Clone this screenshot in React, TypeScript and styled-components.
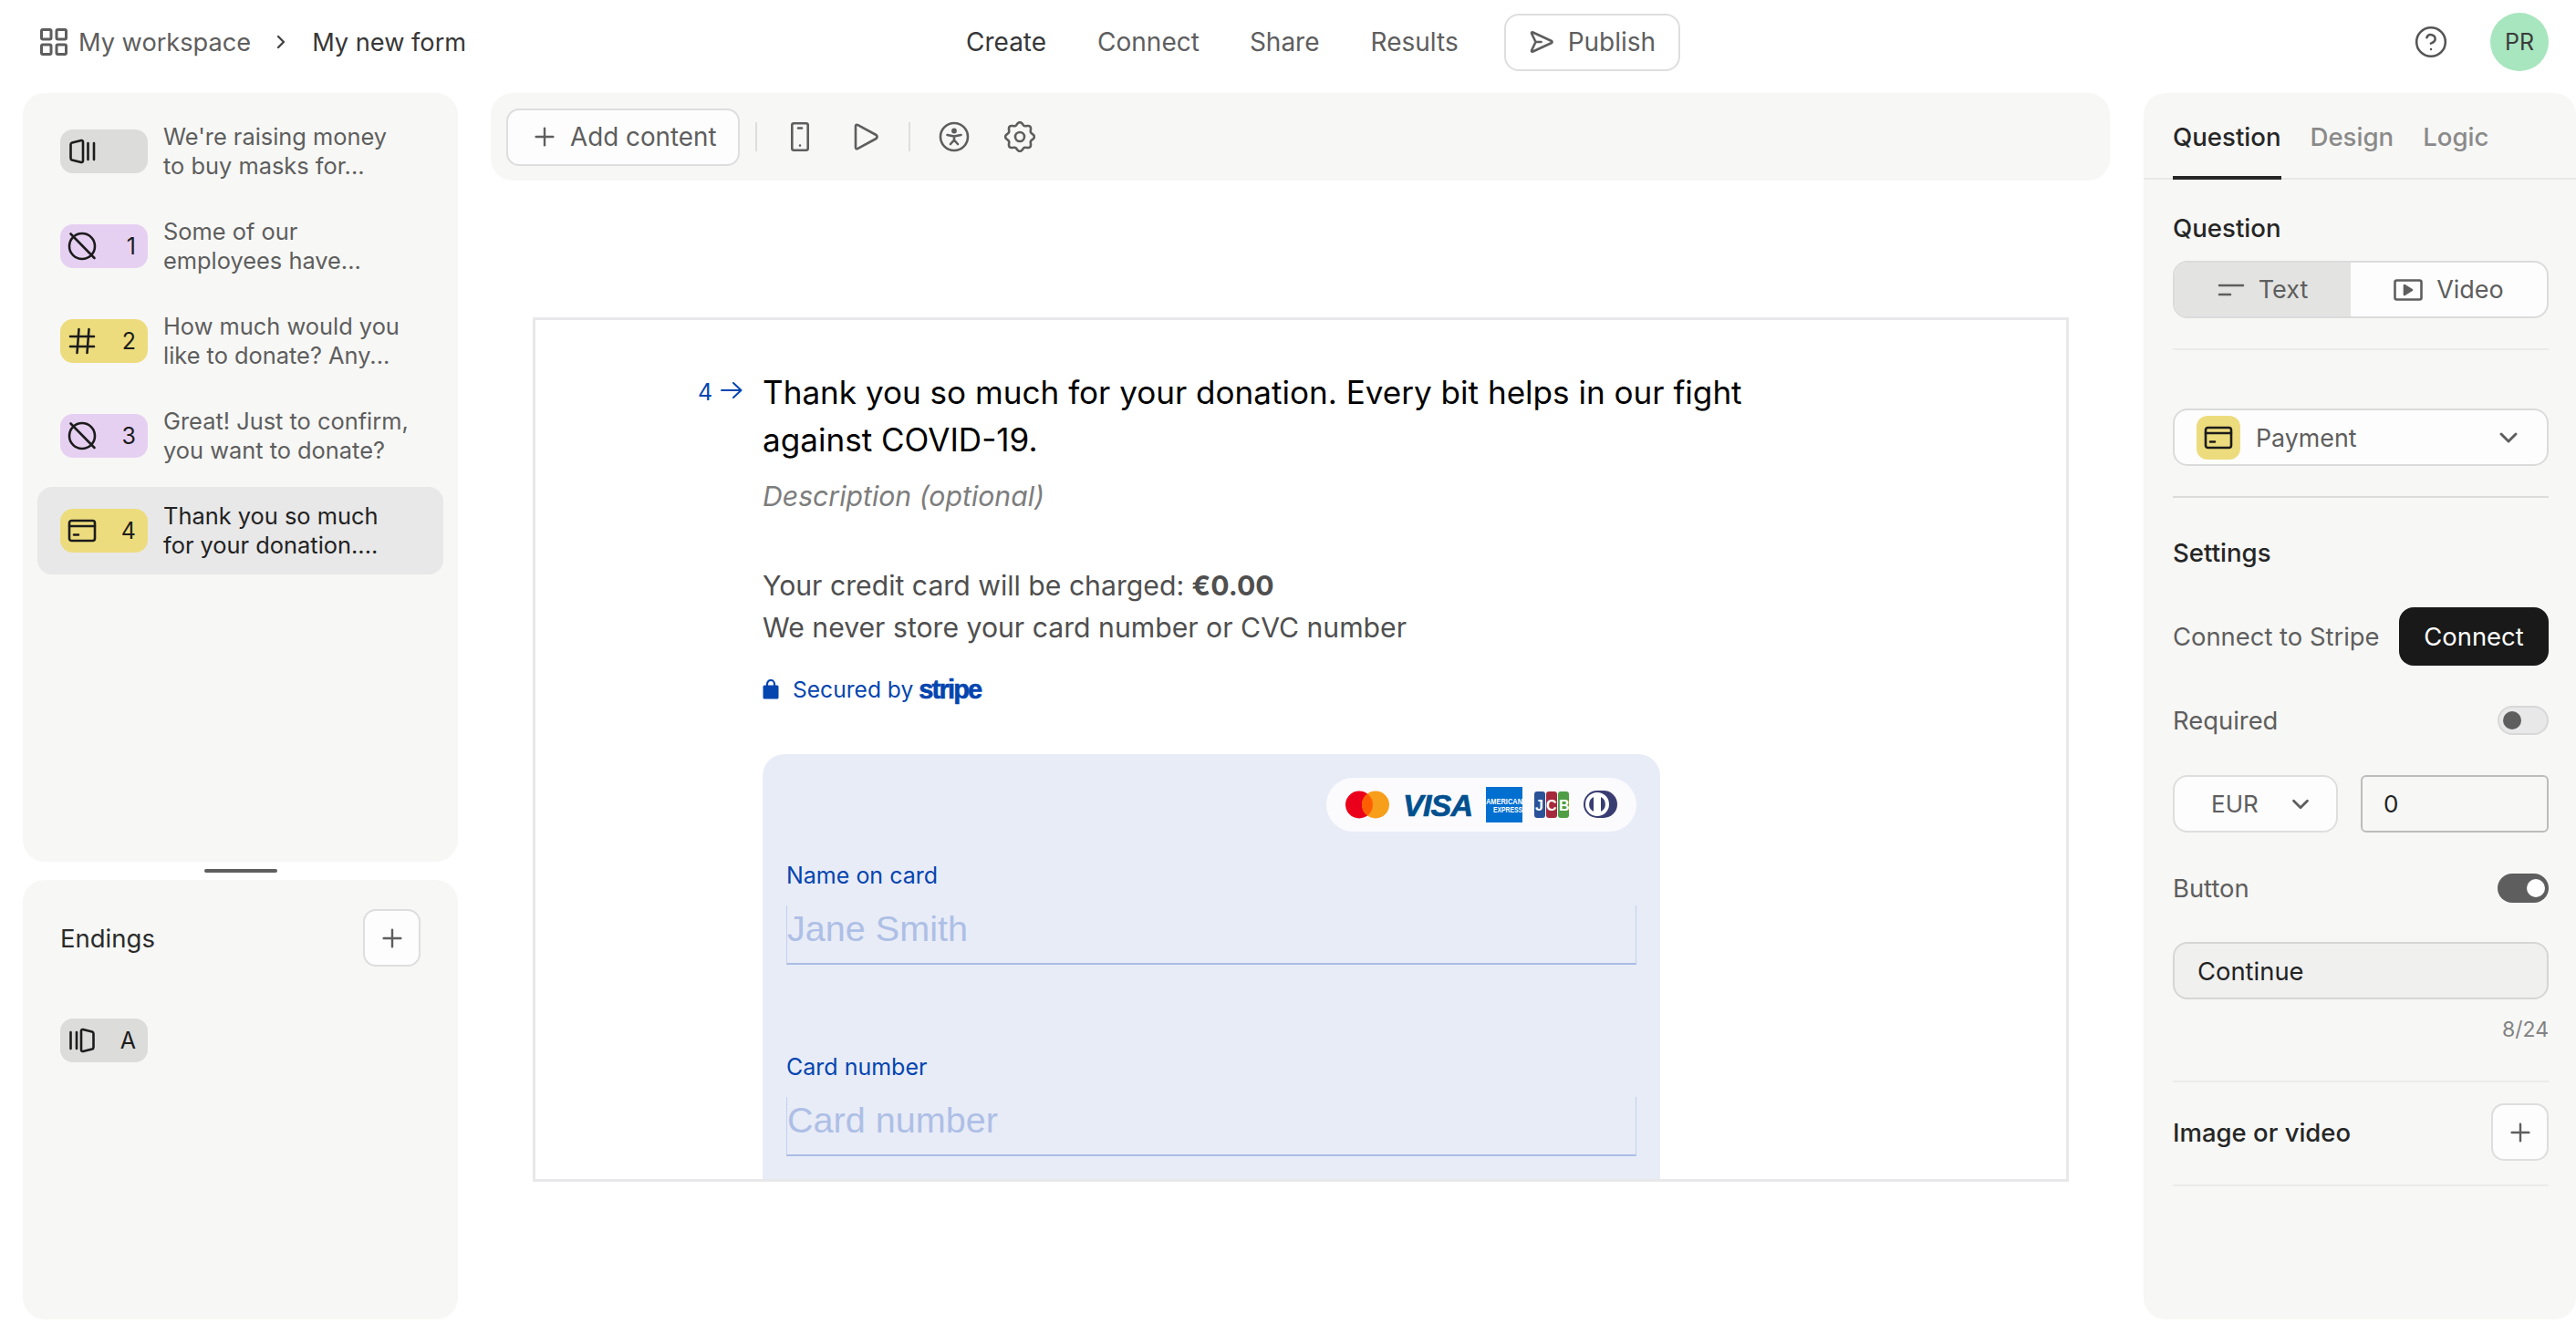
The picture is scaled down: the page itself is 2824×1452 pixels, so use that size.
import React from "react";
import styled, { createGlobalStyle } from "styled-components";
import { ChevronDown, ChevronRight, CircleHelp, LayoutGrid, Plus } from "lucide-react";

const GlobalStyle = createGlobalStyle`
  html, body {
    margin: 0;
    padding: 0;
    background: #fff;
  }
  * {
    box-sizing: border-box;
  }
  body {
    font-family: Inter, "Liberation Sans", sans-serif;
    color: #5e5e5e;
  }
`;

const Page = styled.div`
  width: 2824px;
  height: 1452px;
  overflow: hidden;
  display: flex;
  flex-direction: column;
`;

/* top bar */
const Header = styled.header`
  height: 102px;
  flex: none;
  display: flex;
  align-items: center;
  padding: 0 30px 10px 42px;
`;

const Crumbs = styled.div`
  width: 1017px;
  flex: none;
  display: flex;
  align-items: center;
  font-size: 27.2px;
`;

const GridIcon = styled(LayoutGrid)`
  margin-left: -1px;
`;

const CrumbLink = styled.span`
  margin-left: 9px;
`;

const CrumbCurrent = styled.span`
  color: #373737;
`;

const CrumbSep = styled.span`
  display: flex;
  margin: 0 22px 0 21px;
  color: #444;
`;

const Nav = styled.nav`
  display: flex;
  align-items: center;
  font-size: 28px;
  height: 63px;
`;

const NavLink = styled.a<{ $active?: boolean; $gap: number }>`
  color: ${(p) => (p.$active ? "#373737" : "#5e5e5e")};
  margin-right: ${(p) => p.$gap}px;
`;

const PublishButton = styled.button`
  width: 193px;
  height: 63px;
  border: 2px solid #dedede;
  border-radius: 16px;
  background: #fff;
  font: inherit;
  color: #5e5e5e;
  display: flex;
  align-items: center;
  gap: 16px;
  padding: 0 0 0 26px;
`;

const HeaderRight = styled.div`
  margin-left: auto;
  display: flex;
  align-items: center;
  gap: 46px;
  color: #555;
`;

const Avatar = styled.div`
  width: 64px;
  height: 64px;
  border-radius: 50%;
  background: #a8e6bf;
  color: #3b3b3b;
  font-size: 25px;
  display: flex;
  align-items: center;
  justify-content: center;
`;

/* columns */
const Body = styled.div`
  flex: 1;
  min-height: 0;
  display: flex;
  padding-bottom: 5px;
`;

const LeftColumn = styled.aside`
  width: 477px;
  margin-left: 25px;
  flex: none;
  display: flex;
  flex-direction: column;
`;

const Panel = styled.div`
  background: #f7f7f5;
  border-radius: 24px;
`;

const ListPanel = styled(Panel)`
  height: 843px;
  flex: none;
  padding: 16px;
  display: flex;
  flex-direction: column;
  gap: 8px;
`;

const Handle = styled.div`
  width: 80px;
  height: 4px;
  flex: none;
  border-radius: 2px;
  background: #5e5e5e;
  margin: 8px auto;
`;

const EndingsPanel = styled(Panel)`
  flex: 1;
  padding: 32px 41px 0 41px;
`;

const EndingsHead = styled.div`
  display: flex;
  align-items: center;
  justify-content: space-between;
  font-size: 27.5px;
  color: #2b2b2b;
  margin-bottom: 57px;
`;

const Row = styled.div<{ $active?: boolean }>`
  height: 96px;
  flex: none;
  border-radius: 16px;
  padding: 0 25px;
  display: flex;
  align-items: center;
  gap: 17px;
  background: ${(p) => (p.$active ? "#e8e8e8" : "transparent")};
  color: ${(p) => (p.$active ? "#222" : "#5e5e5e")};
`;

const RowText = styled.div`
  font-size: 25.4px;
  line-height: 32px;
  white-space: nowrap;
`;

const Badge = styled.div<{ $bg: string }>`
  width: 96px;
  height: 48px;
  flex: none;
  border-radius: 14px;
  background: ${(p) => p.$bg};
  color: #1c1c1c;
  font-size: 25px;
  display: flex;
  align-items: center;
  justify-content: space-between;
  padding: 0 13px 0 8px;
`;

const IconBadge = styled.div`
  width: 48px;
  height: 48px;
  flex: none;
  border-radius: 12px;
  background: #eddc7d;
  color: #1c1c1c;
  display: flex;
  align-items: center;
  justify-content: center;
  margin-left: 24px;
`;

const IconSvg = styled.svg`
  display: block;
  flex: none;
  fill: none;
  stroke: currentColor;
  stroke-width: 2.6;
  stroke-linecap: round;
  stroke-linejoin: round;
`;

const ThinIconSvg = styled(IconSvg)`
  stroke-width: 2;
  margin-bottom: 4px;
`;

const SquareButton = styled.button`
  width: 63px;
  height: 63px;
  flex: none;
  border: 2px solid #dedede;
  border-radius: 14px;
  background: #fdfdfd;
  color: #5e5e5e;
  display: flex;
  align-items: center;
  justify-content: center;
  padding: 0;
`;

/* centre */
const Center = styled.main`
  width: 1775px;
  margin-left: 36px;
  flex: none;
  display: flex;
  flex-direction: column;
`;

const Toolbar = styled(Panel)`
  height: 96px;
  flex: none;
  display: flex;
  align-items: center;
  padding-left: 17px;
  color: #5e5e5e;
`;

const AddButton = styled.button`
  width: 256px;
  height: 63px;
  border: 2px solid #dedede;
  border-radius: 14px;
  background: #fdfdfd;
  font: inherit;
  font-size: 27.8px;
  color: #5e5e5e;
  display: flex;
  align-items: center;
  gap: 12px;
  padding: 0 0 0 24px;
  margin-right: 17px;
`;

const ToolDivider = styled.div`
  width: 2px;
  height: 32px;
  background: #dedede;
`;

const ToolIcon = styled.span<{ $left: number }>`
  display: flex;
  margin-left: ${(p) => p.$left}px;
`;

const Canvas = styled.div`
  height: 948px;
  flex: none;
  margin: 150px 45px 0 46px;
  border: 3px solid #e8e8ea;
  background: #fff;
  overflow: hidden;
  padding: 53px 0 0 178px;
`;

const QuestionRow = styled.div`
  display: flex;
`;

const QuestionNumber = styled.div`
  width: 71px;
  flex: none;
  display: flex;
  align-items: center;
  gap: 9px;
  height: 52px;
  font-size: 25px;
  color: #0445af;
`;

const QuestionBody = styled.div`
  width: 984px;
`;

const Heading = styled.h1`
  margin: 0;
  font-size: 35.1px;
  line-height: 52px;
  font-weight: 400;
  color: #000;
  white-space: nowrap;
`;

const Description = styled.p`
  margin: 13px 0 0;
  font-size: 30.2px;
  line-height: 46px;
  font-style: italic;
  color: #7d7d7d;
`;

const Charge = styled.p`
  margin: 52px 0 0;
  font-size: 30.2px;
  line-height: 46px;
  color: #4f4f4f;
`;

const Secured = styled.div`
  margin-top: 27px;
  display: flex;
  align-items: center;
  gap: 15px;
  font-size: 24.6px;
  line-height: 36px;
  color: #0445af;
`;

const StripeWord = styled.b`
  font-family: "Liberation Sans", sans-serif;
  font-size: 29px;
  letter-spacing: -1.8px;
  margin-left: -9px;
  -webkit-text-stroke: 0.6px #0445af;
`;

const CardBox = styled.div`
  margin-top: 53px;
  height: 520px;
  border-radius: 24px;
  background: #e8ecf7;
  padding: 26px 26px 0;
`;

const LogoPill = styled.div`
  width: 340px;
  height: 59px;
  margin-left: auto;
  border-radius: 30px;
  background: #fbfbfe;
  display: flex;
  align-items: center;
`;

const FieldLabel = styled.div`
  margin-top: 31px;
  font-size: 25px;
  line-height: 34px;
  color: #0445af;
`;

const Field = styled.div<{ $gap?: number }>`
  height: 65px;
  margin: 16px 0 ${(p) => p.$gap ?? 0}px;
  border-left: 1px solid #c3d0ec;
  border-right: 1px solid #c3d0ec;
  border-bottom: 2px solid #a9bde6;
  font-family: "Liberation Sans", sans-serif;
  font-size: 39.6px;
  line-height: 50px;
  color: #aebfe6;
`;

/* right panel */
const RightPanel = styled(Panel)`
  width: 474px;
  margin-left: 37px;
  flex: none;
`;

const Tabs = styled.div`
  height: 95px;
  border-bottom: 2px solid #e8e8e6;
  padding-left: 32px;
  display: flex;
  gap: 32px;
  font-size: 27.6px;
  font-weight: 500;
`;

const Tab = styled.div<{ $active?: boolean }>`
  height: 95px;
  padding-top: 31px;
  line-height: 34px;
  color: ${(p) => (p.$active ? "#262626" : "#8a8a8a")};
  border-bottom: ${(p) => (p.$active ? "4px solid #262626" : "none")};
`;

const RightBody = styled.div`
  padding: 0 30px 0 32px;
`;

const SectionTitle = styled.div<{ $top: number }>`
  margin-top: ${(p) => p.$top}px;
  font-size: 27.6px;
  line-height: 36px;
  font-weight: 500;
  color: #262626;
`;

const Segmented = styled.div`
  margin-top: 18px;
  height: 63px;
  border: 2px solid #dbdbdb;
  border-radius: 16px;
  overflow: hidden;
  display: flex;
  background: #fdfdfd;
  font-size: 27px;
`;

const Segment = styled.div<{ $active?: boolean; $width: number }>`
  width: ${(p) => p.$width}px;
  background: ${(p) => (p.$active ? "#e3e3e2" : "transparent")};
  display: flex;
  align-items: center;
  justify-content: center;
  gap: 15px;
`;

const Rule = styled.div<{ $top: number; $strong?: boolean }>`
  margin-top: ${(p) => p.$top}px;
  height: 2px;
  background: ${(p) => (p.$strong ? "#dcdcda" : "#ebebe9")};
`;

const SelectBox = styled.div`
  margin-top: 64px;
  height: 63px;
  border: 2px solid #dbdbdb;
  border-radius: 16px;
  background: #fdfdfd;
  display: flex;
  align-items: center;
  gap: 17px;
  font-size: 26.8px;
  padding-right: 26px;
`;

const PushRight = styled.span`
  margin-left: auto;
  display: flex;
`;

const SettingRow = styled.div<{ $top: number; $height: number }>`
  margin-top: ${(p) => p.$top}px;
  height: ${(p) => p.$height}px;
  display: flex;
  align-items: center;
  justify-content: space-between;
  font-size: 27.4px;
`;

const DarkButton = styled.button`
  width: 164px;
  height: 64px;
  border: 0;
  border-radius: 16px;
  background: #191919;
  color: #fff;
  font: inherit;
  padding: 0;
`;

const Switch = styled.div<{ $on?: boolean }>`
  width: 56px;
  height: 32px;
  border-radius: 16px;
  padding: 0 4px;
  background: ${(p) => (p.$on ? "#5e5e5e" : "#e8e8e8")};
  border: ${(p) => (p.$on ? "0" : "2px solid #d8d8d8")};
  display: flex;
  justify-content: ${(p) => (p.$on ? "flex-end" : "flex-start")};
  align-items: center;
  &::after {
    content: "";
    width: 20px;
    height: 20px;
    border-radius: 50%;
    background: ${(p) => (p.$on ? "#fff" : "#5e5e5e")};
  }
`;

const PriceRow = styled.div`
  margin-top: 44px;
  display: flex;
  justify-content: space-between;
  font-size: 26px;
`;

const CurrencySelect = styled.div`
  width: 181px;
  height: 63px;
  border: 2px solid #dedede;
  border-radius: 16px;
  background: #fdfdfd;
  display: flex;
  align-items: center;
  gap: 31px;
  padding-left: 40px;
`;

const AmountInput = styled.div`
  width: 206px;
  height: 63px;
  border: 2px solid #bcbcbc;
  border-radius: 6px;
  color: #222;
  display: flex;
  align-items: center;
  padding-left: 23px;
`;

const ContinueInput = styled.div`
  margin-top: 43px;
  height: 63px;
  border: 2px solid #d6d6d4;
  border-radius: 16px;
  background: #f0f0ef;
  color: #222;
  font-size: 27.4px;
  display: flex;
  align-items: center;
  padding-left: 25px;
`;

const Counter = styled.div`
  margin-top: 19px;
  text-align: right;
  font-size: 23px;
  line-height: 28px;
  color: #828282;
`;

const MediaRow = styled.div`
  margin-top: 23px;
  display: flex;
  align-items: center;
  justify-content: space-between;
  font-size: 27.5px;
  font-weight: 500;
  color: #262626;
`;

function WelcomeIcon() {
  return (
    <IconSvg width="32" height="32" viewBox="0 0 32 32">
      <path d="M5 6.5 L15 4 Q17 3.6 17 6 V26 Q17 28.4 15 28 L5 25.5 Q3.5 25 3.5 23.5 V8.5 Q3.5 7 5 6.5Z" />
      <path d="M22.5 7v18M29 7v18" />
    </IconSvg>
  );
}

function EndingIcon() {
  return (
    <IconSvg width="32" height="32" viewBox="0 0 32 32">
      <path d="M3.5 7v18M10 7v18" />
      <path d="M27 6.5 L17 4 Q15 3.6 15 6 V26 Q15 28.4 17 28 L27 25.5 Q28.5 25 28.5 23.5 V8.5 Q28.5 7 27 6.5Z" />
    </IconSvg>
  );
}

function BanIcon() {
  return (
    <IconSvg width="32" height="32" viewBox="0 0 32 32">
      <circle cx="16" cy="16" r="14" />
      <path d="M3.5 2.5 L29.5 29" />
    </IconSvg>
  );
}

function HashIcon() {
  return (
    <IconSvg width="32" height="32" viewBox="0 0 32 32">
      <path d="M3 11h26M3 22h26M12.5 3l-2 26M23.5 3l-2 26" />
    </IconSvg>
  );
}

function CardIcon() {
  return (
    <IconSvg width="32" height="32" viewBox="0 0 32 32">
      <rect x="2" y="5" width="28" height="22" rx="2.5" />
      <path d="M2 11h28M7 20.5h5" />
    </IconSvg>
  );
}

function PublishIcon() {
  return (
    <IconSvg width="26" height="24" viewBox="0 0 26 24">
      <path d="M3.5 1.5 L24 11 Q25 12 24 13 L3.5 22.5 Q1.5 23 2.2 21 L6.5 12 L2.2 3 Q1.5 1 3.5 1.5Z" />
      <path d="M6.5 12h6" />
    </IconSvg>
  );
}

function PhoneIcon() {
  return (
    <IconSvg width="20" height="32" viewBox="0 0 20 32">
      <rect x="1.3" y="1.3" width="17.4" height="29.4" rx="2" />
      <path d="M8 6.5h4M10 25.5v.1" />
    </IconSvg>
  );
}

function PlayIcon() {
  return (
    <IconSvg width="30" height="32" viewBox="0 0 30 32">
      <path d="M4 4.5 Q4 2 6.5 3.2 L26.5 14 Q28.5 16 26.5 18 L6.5 28.8 Q4 30 4 27.5Z" />
    </IconSvg>
  );
}

function PersonIcon() {
  return (
    <IconSvg width="34" height="34" viewBox="0 0 34 34">
      <circle cx="17" cy="17" r="15" />
      <circle cx="17" cy="10.5" r="1.6" fill="currentColor" />
      <path d="M9.5 15 L17 16.5 L24.5 15M17 16.5V20.5M17 20.5l-4 4.5M17 20.5l4 4.5" />
    </IconSvg>
  );
}

// eight soft teeth, sampled round the circle
const gearPath =
  Array.from({ length: 96 }, (_, i) => {
    const a = (i / 96) * Math.PI * 2;
    const r = 14.4 + 1.5 * Math.cos(8 * a);
    const x = 17 + r * Math.sin(a);
    const y = 17 - r * Math.cos(a);
    return `${i === 0 ? "M" : "L"}${x.toFixed(2)} ${y.toFixed(2)}`;
  }).join(" ") + "Z";

function GearIcon() {
  return (
    <IconSvg width="34" height="34" viewBox="0 0 34 34">
      <path d={gearPath} />
      <circle cx="17" cy="17" r="5" />
    </IconSvg>
  );
}

function ArrowIcon() {
  return (
    <ThinIconSvg width="24" height="18" viewBox="0 0 24 18">
      <path d="M1 9h21.5M14 1l8.5 8-8.5 8" />
    </ThinIconSvg>
  );
}

function LockIcon() {
  return (
    <svg width="18" height="22" viewBox="0 0 18 22" style={{ display: "block" }}>
      <path d="M5 7V5a4 4 0 0 1 8 0v2" fill="none" stroke="#0445af" strokeWidth="2.2" />
      <rect x="0.5" y="6.5" width="17" height="15" rx="1.5" fill="#0445af" />
    </svg>
  );
}

function TextLinesIcon() {
  return (
    <IconSvg width="30" height="20" viewBox="0 0 30 20">
      <path d="M2 5h26M2 15h12" />
    </IconSvg>
  );
}

function VideoIcon() {
  return (
    <IconSvg width="32" height="24" viewBox="0 0 32 24">
      <rect x="1.5" y="1.5" width="29" height="21" rx="2" />
      <path d="M12 7l8 5-8 5z" fill="currentColor" />
    </IconSvg>
  );
}

function CardLogos() {
  return (
    <svg width="340" height="59" viewBox="0 0 340 59" style={{ display: "block" }}>
      <circle cx="36" cy="29.5" r="15" fill="#eb001b" />
      <circle cx="54" cy="29.5" r="15" fill="#f79e1b" />
      <path d="M45 17.5a15 15 0 0 1 0 24a15 15 0 0 1 0-24z" fill="#ff5f00" />
      <text x="84" y="42" fontFamily="Liberation Sans" fontWeight="700" fontStyle="italic" fontSize="34" textLength="77" stroke="#00508f" strokeWidth="0.7" fill="#00508f">VISA</text>
      <rect x="175" y="10" width="40" height="39" fill="#016fd0" />
      <text x="175" y="29" fontFamily="Liberation Sans" fontWeight="700" fontSize="9" textLength="40" lengthAdjust="spacingAndGlyphs" fill="#fff">AMERICAN</text>
      <text x="183" y="38" fontFamily="Liberation Sans" fontWeight="700" fontSize="9" textLength="32" lengthAdjust="spacingAndGlyphs" fill="#fff">EXPRESS</text>
      <rect x="228" y="15" width="12" height="29" rx="3" fill="#2a5298" />
      <rect x="241" y="15" width="12" height="29" rx="3" fill="#a52a3c" />
      <rect x="254" y="15" width="12" height="29" rx="3" fill="#4f9d45" />
      <text x="229" y="36" fontFamily="Liberation Sans" fontWeight="700" fontSize="16" fill="#fff">J</text>
      <text x="241" y="36" fontFamily="Liberation Sans" fontWeight="700" fontSize="16" fill="#fff">C</text>
      <text x="255" y="36" fontFamily="Liberation Sans" fontWeight="700" fontSize="16" fill="#fff">B</text>
      <rect x="282" y="14" width="37" height="30" rx="15" fill="#3a3d72" />
      <circle cx="297" cy="29" r="13" fill="#fff" />
      <path d="M293 21a9 9 0 0 0 0 16zM301 21a9 9 0 0 1 0 16z" fill="#3a3d72" />
    </svg>
  );
}

const rows = [
  { bg: "#dcdcda", icon: <WelcomeIcon />, num: "", text: ["We're raising money", "to buy masks for..."] },
  { bg: "#e6d0f2", icon: <BanIcon />, num: "1", text: ["Some of our", "employees have..."] },
  { bg: "#eddc7d", icon: <HashIcon />, num: "2", text: ["How much would you", "like to donate? Any..."] },
  { bg: "#e6d0f2", icon: <BanIcon />, num: "3", text: ["Great! Just to confirm,", "you want to donate?"] },
  { bg: "#eddc7d", icon: <CardIcon />, num: "4", text: ["Thank you so much", "for your donation...."], active: true },
];

export default function App() {
  return (
    <Page>
      <GlobalStyle />
      <Header>
        <Crumbs>
          <GridIcon size={36} strokeWidth={2} />
          <CrumbLink>My workspace</CrumbLink>
          <CrumbSep>
            <ChevronRight size={24} strokeWidth={2.4} />
          </CrumbSep>
          <CrumbCurrent>My new form</CrumbCurrent>
        </Crumbs>
        <Nav>
          <NavLink $active $gap={56}>Create</NavLink>
          <NavLink $gap={55}>Connect</NavLink>
          <NavLink $gap={56}>Share</NavLink>
          <NavLink $gap={50}>Results</NavLink>
          <PublishButton>
            <PublishIcon />
            Publish
          </PublishButton>
        </Nav>
        <HeaderRight>
          <CircleHelp size={38} strokeWidth={1.6} />
          <Avatar>PR</Avatar>
        </HeaderRight>
      </Header>
      <Body>
        <LeftColumn>
          <ListPanel>
            {rows.map((r) => (
              <Row key={r.text[0]} $active={r.active}>
                <Badge $bg={r.bg}>
                  {r.icon}
                  <span>{r.num}</span>
                </Badge>
                <RowText>
                  {r.text[0]}
                  <br />
                  {r.text[1]}
                </RowText>
              </Row>
            ))}
          </ListPanel>
          <Handle />
          <EndingsPanel>
            <EndingsHead>
              Endings
              <SquareButton>
                <Plus size={32} strokeWidth={1.8} />
              </SquareButton>
            </EndingsHead>
            <Badge $bg="#dcdcda">
              <EndingIcon />
              <span>A</span>
            </Badge>
          </EndingsPanel>
        </LeftColumn>

        <Center>
          <Toolbar>
            <AddButton>
              <Plus size={32} strokeWidth={1.8} />
              Add content
            </AddButton>
            <ToolDivider />
            <ToolIcon $left={37}><PhoneIcon /></ToolIcon>
            <ToolIcon $left={47}><PlayIcon /></ToolIcon>
            <ToolIcon $left={32}><ToolDivider /></ToolIcon>
            <ToolIcon $left={31}><PersonIcon /></ToolIcon>
            <ToolIcon $left={38}><GearIcon /></ToolIcon>
          </Toolbar>
          <Canvas>
            <QuestionRow>
              <QuestionNumber>
                4
                <ArrowIcon />
              </QuestionNumber>
              <QuestionBody>
                <Heading>
                  Thank you so much for your donation. Every bit helps in our fight
                  <br />
                  against COVID-19.
                </Heading>
                <Description>Description (optional)</Description>
                <Charge>
                  Your credit card will be charged: <b>€0.00</b>
                  <br />
                  We never store your card number or CVC number
                </Charge>
                <Secured>
                  <LockIcon />
                  <span>Secured by</span>
                  <StripeWord>stripe</StripeWord>
                </Secured>
                <CardBox>
                  <LogoPill>
                    <CardLogos />
                  </LogoPill>
                  <FieldLabel>Name on card</FieldLabel>
                  <Field $gap={95}>Jane Smith</Field>
                  <FieldLabel>Card number</FieldLabel>
                  <Field>Card number</Field>
                </CardBox>
              </QuestionBody>
            </QuestionRow>
          </Canvas>
        </Center>

        <RightPanel>
          <Tabs>
            <Tab $active>Question</Tab>
            <Tab>Design</Tab>
            <Tab>Logic</Tab>
          </Tabs>
          <RightBody>
            <SectionTitle $top={35}>Question</SectionTitle>
            <Segmented>
              <Segment $active $width={193}>
                <TextLinesIcon />
                Text
              </Segment>
              <Segment $width={215}>
                <VideoIcon />
                Video
              </Segment>
            </Segmented>
            <Rule $top={33} />
            <SelectBox>
              <IconBadge>
                <CardIcon />
              </IconBadge>
              Payment
              <PushRight>
                <ChevronDown size={32} strokeWidth={2.2} />
              </PushRight>
            </SelectBox>
            <Rule $top={33} $strong />
            <SectionTitle $top={42}>Settings</SectionTitle>
            <SettingRow $top={42} $height={64}>
              Connect to Stripe
              <DarkButton>Connect</DarkButton>
            </SettingRow>
            <SettingRow $top={44} $height={32}>
              Required
              <Switch />
            </SettingRow>
            <PriceRow>
              <CurrencySelect>
                EUR
                <ChevronDown size={30} strokeWidth={2.2} />
              </CurrencySelect>
              <AmountInput>0</AmountInput>
            </PriceRow>
            <SettingRow $top={45} $height={32}>
              Button
              <Switch $on />
            </SettingRow>
            <ContinueInput>Continue</ContinueInput>
            <Counter>8/24</Counter>
            <Rule $top={42} />
            <MediaRow>
              Image or video
              <SquareButton>
                <Plus size={32} strokeWidth={1.8} />
              </SquareButton>
            </MediaRow>
            <Rule $top={26} />
          </RightBody>
        </RightPanel>
      </Body>
    </Page>
  );
}
